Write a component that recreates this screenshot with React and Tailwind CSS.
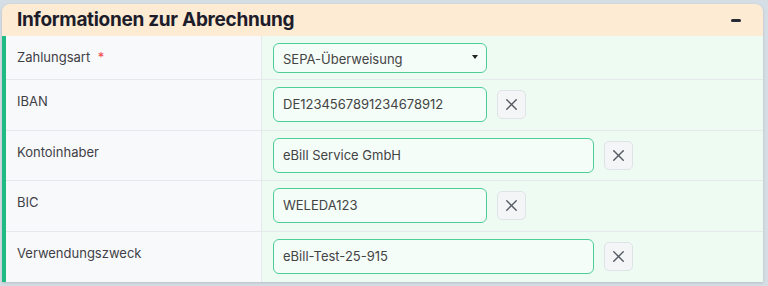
import {X} from 'lucide-react';

const rows = [
  {label: 'IBAN', value: 'DE1234567891234678912', wide: false, h: 'h-[51px]'},
  {label: 'Kontoinhaber', value: 'eBill Service GmbH', wide: true, h: 'h-[50px]'},
  {label: 'BIC', value: 'WELEDA123', wide: false, h: 'h-[51px]'},
  {label: 'Verwendungszweck', value: 'eBill-Test-25-915', wide: true, h: 'h-[50px]'},
];

const FieldRow = ({label, value, wide, h, last}) => (
  <div className={`grid grid-cols-[256px_1fr] ${h} ${last ? '' : 'border-b border-[#e6e9ec]'}`}>
    <div className="bg-[#f8f9fb] pl-[11px] pt-[11px] text-[13px] leading-5 text-[#3f3f46] border-r border-[#e6e9ec]">
      {label}
    </div>
    <div className="bg-[#edfbf3] pl-[11px] pt-[7px]">
      <div className="flex items-center gap-[10px]">
        <div
          className={`${wide ? 'w-[321px]' : 'w-[214px]'} h-[35px] flex items-center px-[9px] rounded-md border-[1.5px] border-[#4fcd97] bg-[#f4fdf8] text-[13px] text-[#444]`}
        >
          {value}
        </div>
        <button className="w-[29px] h-[29px] flex items-center justify-center rounded-[5px] border border-[#dfe2e6] bg-[#f4f5f7] text-[#555b63]">
          <X className="w-[19px] h-[19px]" strokeWidth={1.75} />
        </button>
      </div>
    </div>
  </div>
);

export default function App() {
  return (
    <div
      className="h-[286px] w-[768px] bg-[#d6dee5] pt-[4px] pl-[2px] overflow-hidden"
      style={{fontFamily: 'Inter, "Noto Sans", sans-serif'}}
    >
      <div className="w-[761px] rounded-t-lg overflow-hidden shadow-[0_1px_3px_rgba(0,0,0,0.15)]">
        <div className="h-8 bg-[#fdebd3] flex items-center justify-between pl-[15px] pr-[22px]">
          <h2 className="text-[19px] font-bold text-[#1c1c2b] tracking-[-0.3px]">
            Informationen zur Abrechnung
          </h2>
          <span className="block w-[10px] h-[2.5px] bg-[#2a2a35] rounded-sm mt-[1px]" />
        </div>
        <div className="border-l-4 border-[#1fbb82]">
          <div className="grid grid-cols-[256px_1fr] h-[44px] border-b border-[#e6e9ec]">
            <div className="bg-[#f8f9fb] pl-[11px] pt-[11px] text-[13px] leading-5 text-[#3f3f46] border-r border-[#e6e9ec]">
              Zahlungsart <span className="text-[#ef4444] ml-[4px]">*</span>
            </div>
            <div className="bg-[#edfbf3] pl-[11px] pt-[7px]">
              <div className="w-[214px] h-[30px] flex items-center justify-between pl-[9px] pr-[8px] rounded-md border-[1.5px] border-[#4fcd97] bg-[#f4fdf8] text-[13px] text-[#444]">
                <span className="mt-[3px]">SEPA-Überweisung</span>
                <svg width="6" height="4" viewBox="0 0 6 4" className="mb-[2px]">
                  <path d="M0 0 L6 0 L3 4 Z" fill="#222" />
                </svg>
              </div>
            </div>
          </div>
          {rows.map((row, idx) => (
            <FieldRow key={row.label} {...row} last={idx === rows.length - 1} />
          ))}
        </div>
      </div>
    </div>
  );
}
